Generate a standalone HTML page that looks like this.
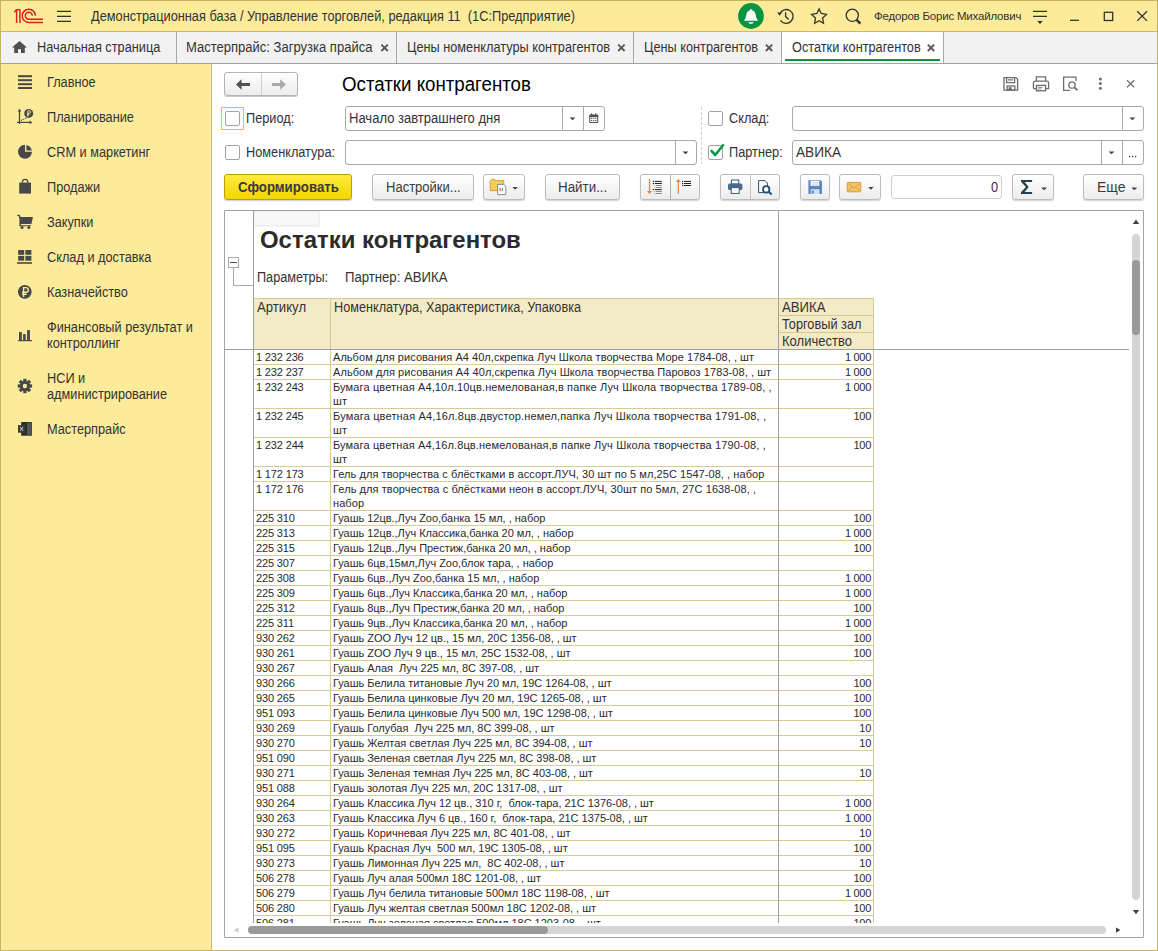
<!DOCTYPE html><html><head><meta charset="utf-8"><style>*{margin:0;padding:0;box-sizing:border-box}
html,body{width:1158px;height:951px;overflow:hidden;background:#fff}
body{position:relative;font-family:"Liberation Sans",sans-serif;color:#333;font-size:13px}
.a{position:absolute}
.t{position:absolute;white-space:pre;line-height:16px;font-size:14px;transform:scaleX(0.91);transform-origin:0 0}
svg{position:absolute;overflow:visible}
#win{position:absolute;left:0;top:0;width:1158px;height:951px;border:1px solid #c6b55e;background:#fbeb9b}
#tbar{position:absolute;left:1px;top:1px;width:1156px;height:31px;background:#fbeb9b;border-bottom:1px solid #c9b866}
#tabs{position:absolute;left:1px;top:32px;width:1156px;height:32px;background:#f2f2f2;border-bottom:1px solid #a3a3a3}
.sep{position:absolute;top:32px;width:1px;height:31px;background:#a8a8a8}
#side{position:absolute;left:1px;top:64px;width:211px;height:886px;background:#fbeb9b;border-right:1px solid #c9b866}
#main{position:absolute;left:212px;top:64px;width:945px;height:886px;background:#fff}
.btn{position:absolute;height:26px;border:1px solid #bdbdbd;border-radius:3px;background:linear-gradient(#fff,#ececec);box-shadow:0 1px 1px rgba(0,0,0,.18)}
.fld{position:absolute;height:24px;border:1px solid #a9a9a9;border-radius:3px;background:#fff}
.vd{position:absolute;top:0;width:1px;height:100%;background:#a9a9a9}
.cb{position:absolute;width:15px;height:15px;border:1px solid #a3a3a3;border-radius:2px;background:#fff}
.arr{position:absolute;width:0;height:0;border-left:4px solid transparent;border-right:4px solid transparent;border-top:4px solid #404040}

.r{position:absolute;white-space:pre;font-size:11px;line-height:14px;color:#2a2a2a;letter-spacing:0.07px}
</style></head><body><div id="win"></div>
<div id="tbar"></div>
<!-- 1C logo -->
<svg class="a" style="left:0;top:0" width="80" height="32" viewBox="0 0 80 32">
<g fill="none" stroke="#d8221c" stroke-width="1.45">
<path d="M16.6,23 V9.6 M19.9,23 V9.6 M15.7,9.6 H19.9 M16.6,9.6 L14.2,12.4"/>
<path d="M35.4,15.8 A6.6,6.6 0 1 0 28.8,22.4 H43"/>
<path d="M32.3,15.8 A3.5,3.5 0 1 0 28.8,19.3 H43"/>
</g>
<g stroke="#333" stroke-width="1.35"><path d="M57,11.4H71M57,16.4H71M57,21.4H71"/></g>
</svg>
<div class="t" style="left:91px;top:8px;color:#333;transform:scaleX(0.913)">Демонстрационная база / Управление торговлей, редакция 11  (1С:Предприятие)</div>
<!-- bell -->
<svg class="a" style="left:0;top:0" width="1158" height="32" viewBox="0 0 1158 32">
<circle cx="751" cy="16" r="12.9" fill="#079442"/>
<path d="M751,9.2 c-0.9,0 -1.4,0.6 -1.4,1.2 c-2.6,0.6 -3.2,2.8 -3.4,5.2 c-0.2,2.4 -1.4,3.8 -2.4,5.2 h14.4 c-1,-1.4 -2.2,-2.8 -2.4,-5.2 c-0.2,-2.4 -0.8,-4.6 -3.4,-5.2 c0,-0.6 -0.5,-1.2 -1.4,-1.2z" fill="#fff"/>
<path d="M748.2,22.2 h5.6 c-0.6,1.2 -1.6,1.6 -2.8,1.6 c-1.2,0 -2.2,-0.4 -2.8,-1.6z" fill="#fff"/>
<g fill="none" stroke="#333" stroke-width="1.3">
<path d="M779.9,13.6 A6.9,6.9 0 1 1 780.5,20.3"/>
<path d="M785.6,12.2 V16.6 L788.6,19.4"/>
<path d="M819.1,8.9 L821.2,13.5 L826.5,14.4 L822.6,17.9 L823.5,23.2 L819.1,20.7 L814.6,23.2 L815.5,17.9 L811.6,14.4 L816.9,13.5Z" stroke-linejoin="miter"/>
<circle cx="852.3" cy="15.3" r="6.1"/>
</g>
<path d="M777.2,12.6 L782,12.4 L779.6,15.8Z" fill="#333"/>
<path d="M856.6,19.8 L860.4,23.6" stroke="#333" stroke-width="2.4"/>
<g stroke="#333" stroke-width="1.3" fill="none">
<path d="M1033,11.3H1047M1033,16.4H1047"/>
<path d="M1070,20.3H1079"/>
<rect x="1104.3" y="12.3" width="8.4" height="8.2"/>
<path d="M1137.2,11.2L1147,20.9M1147,11.2L1137.2,20.9"/>
</g>
<path d="M1037.2,21 H1042.8 L1040,23.9Z" fill="#333"/>
</svg>
<div class="t" style="left:874px;top:8px;font-size:11.5px;letter-spacing:-0.2px;color:#333;transform:none">Федоров Борис Михайлович</div>
<!-- tabs -->
<div id="tabs"></div>
<div class="a" style="left:782px;top:32px;width:161px;height:31px;background:#fff"></div>
<div class="sep" style="left:176px"></div>
<div class="sep" style="left:396px"></div>
<div class="sep" style="left:633px"></div>
<div class="sep" style="left:781px"></div>
<div class="sep" style="left:943px"></div>
<svg class="a" style="left:0;top:32px" width="1158" height="31" viewBox="0 32 1158 31">
<path d="M19.5,41 L12,47.6 H14.2 V53 H18 V49.2 H21 V53 H24.8 V47.6 H27Z" fill="#4f4f4f"/>
<g stroke="#555" stroke-width="1.8">
<path d="M381.4,44.6 L387.8,51 M387.8,44.6 L381.4,51"/>
<path d="M618.2,44.6 L624.6,51 M624.6,44.6 L618.2,51"/>
<path d="M765.9,44.6 L772.3,51 M772.3,44.6 L765.9,51"/>
<path d="M927.8,44.6 L934.2,51 M934.2,44.6 L927.8,51"/>
</g>
<rect x="785" y="59" width="155" height="2" fill="#17933f"/>
</svg>
<div class="t" style="left:37px;top:39px">Начальная страница</div>
<div class="t" style="left:186px;top:39px;transform:scaleX(0.93)">Мастерпрайс: Загрузка прайса</div>
<div class="t" style="left:407px;top:39px">Цены номенклатуры контрагентов</div>
<div class="t" style="left:644px;top:39px">Цены контрагентов</div>
<div class="t" style="left:792px;top:39px">Остатки контрагентов</div>
<!-- sidebar -->
<div id="side"></div>
<svg class="a" style="left:0;top:64px" width="212" height="400" viewBox="0 64 212 400">
<g fill="#484848">
<rect x="18" y="75.2" width="14" height="2"/><rect x="18" y="79.2" width="14" height="2"/><rect x="18" y="83.2" width="14" height="2"/><rect x="18" y="87" width="14" height="2"/>
<circle cx="28.7" cy="113.4" r="4.5"/>
<path d="M25,144.8 A7,7 0 1 0 32,151.8 H25Z"/><path d="M26.4,145 A7,7 0 0 1 31.8,150.4 H26.4Z"/>
<path d="M19.2,182.6 H31 V193.6 H19.2Z"/>
<path d="M17.3,214.7 H19.6 L20.6,217 H33 L31.4,224 H20.9 L20.9,225.2 H30.9 V226.2 H19.4 V219 L18.6,216 H17.3Z"/>
<circle cx="22" cy="227.5" r="1.5"/><circle cx="28.8" cy="227.5" r="1.5"/>
<rect x="18.2" y="250" width="6" height="4.8"/><rect x="25.4" y="250" width="6" height="4.8"/><rect x="18.2" y="255.9" width="6" height="4.8"/><rect x="25.4" y="255.9" width="6" height="4.8"/><rect x="17" y="262.2" width="15" height="1.6"/>
<circle cx="24.8" cy="291.8" r="6.9"/>
<rect x="18" y="340" width="14" height="1.2"/><rect x="19" y="332.1" width="2.8" height="8"/><rect x="23.1" y="334.1" width="2.6" height="6"/><rect x="27.1" y="330.1" width="2.8" height="10"/>
</g>
<g fill="none" stroke="#484848" stroke-width="1.3">
<path d="M19.5,110 V124 M17,122.4 H31"/><path d="M21,120.6 L22.6,119.4 H23.8 L25.2,118.2 H26.6" stroke-dasharray="1.6,0.8" stroke-width="1"/>
<path d="M22.4,182.8 V182 A2.7,2.7 0 0 1 27.8,182 V182.8"/>
</g>
<path d="M19.5,108.8 L17.6,111.6 H21.4Z M32.4,122.4 L29.6,120.5 V124.3Z" fill="#484848"/>
<g stroke="#fbeb9b" stroke-width="0.9" fill="none"><path d="M27.9,116.6 V110.8 H29.5 A1.2,1.2 0 0 1 29.5,113.2 H26.9 M26.9,114.7 H29.6"/></g>
<g stroke="#fbeb9b" stroke-width="1.4" fill="none"><path d="M23.6,297 V287.6 H26 A2.3,2.3 0 0 1 26,292.2 H22 M22,294.2 H26.6"/></g>
<!-- gear -->
<g transform="translate(24.9,386)" fill="#484848">
<circle r="5.2"/>
<g id="teeth"><rect x="-1.6" y="-7.2" width="3.2" height="14.4"/><rect x="-1.6" y="-7.2" width="3.2" height="14.4" transform="rotate(45)"/><rect x="-1.6" y="-7.2" width="3.2" height="14.4" transform="rotate(90)"/><rect x="-1.6" y="-7.2" width="3.2" height="14.4" transform="rotate(135)"/></g>
<circle r="2.2" fill="#fbeb9b"/>
</g>
<!-- excel -->
<rect x="21.2" y="422" width="10.7" height="13.7" fill="#2a2a2a"/><rect x="27" y="422.6" width="4.6" height="12.8" fill="#555"/><rect x="18" y="425.1" width="6.9" height="7.6" fill="#3a3a3a"/>
<path d="M20.2,427 L23,430.8 M23,427 L20.2,430.8" stroke="#cfe8dc" stroke-width="0.9"/>
</svg>
<div class="t" style="left:47px;top:74px">Главное</div>
<div class="t" style="left:47px;top:109px">Планирование</div>
<div class="t" style="left:47px;top:144px">CRM и маркетинг</div>
<div class="t" style="left:47px;top:179px">Продажи</div>
<div class="t" style="left:47px;top:214px">Закупки</div>
<div class="t" style="left:47px;top:249px">Склад и доставка</div>
<div class="t" style="left:47px;top:284px">Казначейство</div>
<div class="t" style="left:47px;top:319px">Финансовый результат и<br>контроллинг</div>
<div class="t" style="left:47px;top:370px">НСИ и<br>администрирование</div>
<div class="t" style="left:47px;top:421px">Мастерпрайс</div>
<div id="main"></div>
<!-- form header -->
<div class="btn" style="left:224px;top:72px;width:74px;height:24px;border-color:#b3b3b3;box-shadow:0 1px 0 #c8c8c8"></div>
<div class="a" style="left:261px;top:73px;width:1px;height:22px;background:#d0d0d0"></div>
<div class="t" style="left:342px;top:73px;font-size:20px;line-height:22px;color:#000;transform:scaleX(0.935)">Остатки контрагентов</div>
<!-- row1 -->
<div class="a" style="left:221px;top:107px;width:23px;height:23px;border:1px solid #f6c21a"></div>
<div class="cb" style="left:225px;top:111px"></div>
<div class="t" style="left:246px;top:110px">Период:</div>
<div class="fld" style="left:345px;top:106px;width:260px;height:25px"><div class="vd" style="left:216px"></div><div class="vd" style="left:237px"></div></div>
<div class="t" style="left:349px;top:110px;transform:scaleX(0.93)">Начало завтрашнего дня</div>
<div class="cb" style="left:708px;top:111px"></div>
<div class="t" style="left:729px;top:110px">Склад:</div>
<div class="fld" style="left:792px;top:106px;width:352px;height:25px"><div class="vd" style="left:329px"></div></div>
<!-- row2 -->
<div class="cb" style="left:225px;top:145px"></div>
<div class="t" style="left:246px;top:144px">Номенклатура:</div>
<div class="fld" style="left:345px;top:140px;width:352px;height:25px"><div class="vd" style="left:329px"></div></div>
<div class="cb" style="left:708px;top:145px"></div>
<div class="t" style="left:729px;top:144px">Партнер:</div>
<div class="fld" style="left:792px;top:140px;width:352px;height:25px"><div class="vd" style="left:308px"></div><div class="vd" style="left:329px"></div></div>
<div class="t" style="left:796px;top:144px;transform:scaleX(0.977)">АВИКА</div>
<!-- buttons row -->
<div class="btn" style="left:224px;top:174px;width:128px;border-color:#b9a200;background:linear-gradient(#ffea3c,#f4d600);box-shadow:0 1px 1px rgba(0,0,0,.2)"></div>
<div class="t" style="left:238px;top:179px;font-weight:bold;color:#3a3a3a;transform:scaleX(0.946)">Сформировать</div>
<div class="btn" style="left:372px;top:174px;width:102px"></div>
<div class="t" style="left:386px;top:179px;color:#3c3c3c;transform:scaleX(0.93)">Настройки...</div>
<div class="btn" style="left:483px;top:174px;width:42px"></div>
<div class="btn" style="left:545px;top:174px;width:75px"></div>
<div class="t" style="left:558px;top:179px;color:#3c3c3c;transform:scaleX(0.955)">Найти...</div>
<div class="btn" style="left:640px;top:174px;width:60px"></div>
<div class="a" style="left:670px;top:175px;width:1px;height:24px;background:#b0b0b0"></div>
<div class="btn" style="left:720px;top:174px;width:60px"></div>
<div class="a" style="left:750px;top:175px;width:1px;height:24px;background:#c4c4c4"></div>
<div class="btn" style="left:800px;top:174px;width:30px"></div>
<div class="btn" style="left:839px;top:174px;width:42px"></div>
<div class="fld" style="left:891px;top:175px;width:111px;border-color:#cfcfcf"></div>
<div class="t" style="left:991px;top:179px">0</div>
<div class="btn" style="left:1012px;top:174px;width:42px"></div>
<div class="btn" style="left:1083px;top:174px;width:61px"></div>
<div class="t" style="left:1097px;top:179px;color:#3c3c3c;transform:scaleX(1.0)">Еще</div>
<svg class="a" style="left:0;top:0" width="1158" height="210" viewBox="0 0 1158 210">
<!-- nav arrows -->
<path d="M236,84.5 L241.6,79.2 V83 H250 V86 H241.6 V89.8Z" fill="#505050"/>
<path d="M285.8,84.5 L280.2,79.2 V83 H272 V86 H280.2 V89.8Z" fill="#a8a8a8"/>
<!-- header icons -->
<g fill="none" stroke="#6d6d6d" stroke-width="1.3">
<path d="M1004,77.6 H1016 L1017.6,79.2 V90.2 H1004Z"/><path d="M1006.6,77.6 V82.6 H1014.6 V77.6 M1008,79.8 H1013"/><rect x="1007.2" y="86" width="7.6" height="4.2"/>
<path d="M1036.4,81.2 V76.8 H1045.6 V81.2 M1033.4,88.6 V83 Q1033.4,81.2 1035.2,81.2 H1046.8 Q1048.6,81.2 1048.6,83 V88.6 H1045.6 M1036.4,88.6 H1033.4"/><rect x="1036.4" y="85.4" width="9.2" height="5.4"/>
<path d="M1070,90.4 H1063.6 V77.2 H1076 V81"/><circle cx="1072" cy="85" r="3.2"/><path d="M1074.4,87.4 L1077.4,90.4" stroke-width="1.8"/>
</g>
<rect x="1008.6" y="87.2" width="3" height="3" fill="#6d6d6d"/>
<path d="M1037.8,87.4 H1042.6 M1037.8,89 H1041.4" stroke="#6d6d6d" stroke-width="0.8"/>
<circle cx="1100.4" cy="79" r="1.5" fill="#6d6d6d"/><circle cx="1100.4" cy="83.6" r="1.5" fill="#6d6d6d"/><circle cx="1100.4" cy="88.2" r="1.5" fill="#6d6d6d"/>
<path d="M1127,80.2 L1134.2,87.2 M1134.2,80.2 L1127,87.2" stroke="#6d6d6d" stroke-width="1.2"/>
<!-- field arrows -->
<g fill="#404040">
<path d="M569.6,117.4 H575.4 L572.5,120.2Z"/>
<path d="M1129.5,117.4 H1135.3 L1132.4,120.2Z"/>
<path d="M682.6,151.4 H688.4 L685.5,154.2Z"/>
<path d="M1108.6,151.4 H1114.4 L1111.5,154.2Z"/>
<circle cx="1129.6" cy="156.6" r="0.8"/><circle cx="1132.6" cy="156.6" r="0.8"/><circle cx="1135.6" cy="156.6" r="0.8"/>
</g>
<!-- calendar -->
<rect x="589.2" y="114.4" width="9" height="8.6" rx="1" fill="#505050"/><rect x="590.2" y="117.2" width="7" height="4.8" fill="#fff"/>
<g fill="#505050"><rect x="591" y="118" width="1.2" height="1"/><rect x="593.1" y="118" width="1.2" height="1"/><rect x="595.2" y="118" width="1.2" height="1"/><rect x="591" y="120" width="1.2" height="1"/><rect x="593.1" y="120" width="1.2" height="1"/><rect x="595.2" y="120" width="1.2" height="1"/><rect x="591" y="113.4" width="1.2" height="2"/><rect x="595.2" y="113.4" width="1.2" height="2"/></g>
<!-- dashed separator -->
<path d="M701.5,107 V164" stroke="#cfcfcf" stroke-width="1" stroke-dasharray="3,2"/>
<!-- check -->
<path d="M711.6,151 L715.3,155 L723,145.2" fill="none" stroke="#0a9a48" stroke-width="2.6" stroke-linecap="round" stroke-linejoin="round"/>
<!-- folder icon -->
<path d="M490.2,181.2 L491.6,179.4 H494.6 L495.6,180.6 H503.8 V190.6 H490.2Z" fill="#f3cd5a" stroke="#d39a2a" stroke-width="0.9"/>
<path d="M497.6,184.4 H503.6 L505.8,186.6 V194.6 H497.6Z" fill="#fff" stroke="#6f8396" stroke-width="0.9"/>
<rect x="499.6" y="188" width="1" height="3.2" fill="#e63030"/><rect x="501.8" y="188" width="1" height="3.2" fill="#30b040"/>
<path d="M512.4,187 H517.8 L515.1,189.8Z" fill="#404040"/>
<!-- sort icons -->
<g stroke="#f08a4b" stroke-width="1.3" fill="#f08a4b"><path d="M649.5,179 V192" /><path d="M646.9,191 H652.1 L649.5,194.2Z" stroke="none"/>
<path d="M678.3,194 V181"/><path d="M675.7,182 H680.9 L678.3,178.8Z" stroke="none"/></g>
<g fill="#222"><rect x="652.8" y="180.8" width="1.2" height="1.2"/><rect x="654.8" y="180.9" width="7" height="1"/><rect x="652.8" y="182.9" width="1.2" height="1.2"/><rect x="654.8" y="183" width="7" height="1"/><rect x="652.8" y="189" width="1.2" height="1.2"/><rect x="654.8" y="189.1" width="7" height="1"/>
<rect x="682" y="180.8" width="1.2" height="1.2"/><rect x="684" y="180.9" width="7" height="1"/><rect x="682" y="182.9" width="1.2" height="1.2"/><rect x="684" y="183" width="7" height="1"/><rect x="682" y="184.9" width="1.2" height="1.2"/><rect x="684" y="185" width="7" height="1"/></g>
<g fill="#888"><rect x="655.8" y="185" width="6" height="1"/><rect x="655.8" y="187" width="6" height="1"/><rect x="655.8" y="191" width="6" height="1"/><rect x="655.8" y="193" width="6" height="1"/><rect x="654" y="185" width="0.8" height="0.8"/><rect x="654" y="187" width="0.8" height="0.8"/><rect x="654" y="191" width="0.8" height="0.8"/><rect x="654" y="193" width="0.8" height="0.8"/></g>
<!-- printer -->
<rect x="731.4" y="180" width="7.4" height="4" fill="#fff" stroke="#3c5876" stroke-width="1"/>
<rect x="728" y="183.4" width="14.4" height="6.6" rx="1.6" fill="#4a6c92"/>
<rect x="731.2" y="187.6" width="8" height="5.8" fill="#fff" stroke="#3c5876" stroke-width="1"/>
<!-- preview -->
<path d="M758.6,180.6 H765 L767.4,183 V192.6 H758.6Z" fill="#fff" stroke="#2d4d6e" stroke-width="1"/>
<circle cx="766.2" cy="189.4" r="3.2" fill="#fff" stroke="#1f4e79" stroke-width="1.8"/><path d="M768.4,191.6 L771.6,194.6" stroke="#1f4e79" stroke-width="2"/>
<!-- floppy -->
<path d="M808.4,180.2 H820.4 L822,181.8 V194 H808.4Z" fill="#5b88c0"/><rect x="810.6" y="180.8" width="8.6" height="5" fill="#fff"/><rect x="810.8" y="189.2" width="8.6" height="4.8" fill="#d7e0ea"/><rect x="811.8" y="190.6" width="2" height="3" fill="#5b88c0"/>
<path d="M811.8,182.6 H818 M811.8,184.2 H818" stroke="#9fb6d2" stroke-width="0.6"/>
<!-- envelope -->
<rect x="847.2" y="182.4" width="13.6" height="9.4" rx="1" fill="#f2c46a" stroke="#d8952c" stroke-width="0.9"/><path d="M847.6,183 L854,188 L860.4,183 M847.6,191.4 L852.4,187.2 M860.4,191.4 L855.6,187.2" fill="none" stroke="#d8952c" stroke-width="0.8"/>
<path d="M868.2,187 H873.6 L870.9,189.8Z" fill="#404040"/>
<!-- sigma -->
<path d="M1021,180 H1032.1 V182 H1024.6 L1028.7,187 L1024.6,192 H1032.1 V194 H1021 V192.2 L1025.9,187 L1021,181.8Z" fill="#26404f"/>
<path d="M1041.2,187.4 H1047 L1044.1,190.2Z" fill="#404040"/>
<path d="M1131.4,187.4 H1137.2 L1134.3,190.2Z" fill="#404040"/>
</svg>
<!-- sheet frame -->
<div class="a" style="left:224px;top:210px;width:920px;height:728px;border:1px solid #a3a3a3;border-radius:1px;background:#fff"></div>
<div class="a" style="left:254px;top:211px;width:66px;height:16px;background:#f0f0f0"></div>
<div class="a" style="left:255px;top:212px;width:63px;height:13px;background:#f8f8f8"></div>
<div class="a" style="left:253px;top:211px;width:1px;height:712px;background:#a0a0a0"></div>
<!-- collapse box + tree -->
<div class="a" style="left:228px;top:257px;width:11px;height:11px;border:1px solid #a8a8a8;background:#fff"></div>
<div class="a" style="left:230px;top:262px;width:7px;height:1px;background:#505050"></div>
<div class="a" style="left:233px;top:268px;width:1px;height:18px;background:#a8a8a8"></div>
<div class="a" style="left:233px;top:285px;width:20px;height:1px;background:#a8a8a8"></div>
<div class="t" style="left:260px;top:227px;font-size:24px;line-height:26px;font-weight:bold;color:#2b2b2b;transform:scaleX(0.997)">Остатки контрагентов</div>
<div class="t" style="left:257px;top:269px;transform:scaleX(0.906)">Параметры:</div>
<div class="t" style="left:345px;top:269px;transform:scaleX(0.939)">Партнер: АВИКА</div>
<!-- header -->
<div class="a" style="left:254px;top:298px;width:524px;height:51px;background:#f3ebc6;border-top:1px solid #d6c98f"></div>
<div class="a" style="left:330px;top:299px;width:1px;height:50px;background:#d6c98f"></div>
<div class="a" style="left:779px;top:298px;width:95px;height:51px;background:#f3ebc6;border:1px solid #d6c98f;border-left:0;border-bottom:0"></div>
<div class="a" style="left:779px;top:315px;width:94px;height:1px;background:#d6c98f"></div>
<div class="a" style="left:779px;top:332px;width:94px;height:1px;background:#d6c98f"></div>
<div class="t" style="left:257px;top:299px;transform:scaleX(0.94)">Артикул</div>
<div class="t" style="left:334px;top:299px;transform:scaleX(0.905)">Номенклатура, Характеристика, Упаковка</div>
<div class="t" style="left:782px;top:299px;transform:scaleX(0.94)">АВИКА</div>
<div class="t" style="left:782px;top:316px;transform:scaleX(0.911)">Торговый зал</div>
<div class="t" style="left:782px;top:333px;transform:scaleX(0.93)">Количество</div>
<div class="a" style="left:225px;top:350px;width:904px;height:573px;overflow:hidden">
<div class="r" style="left:31px;top:0px;letter-spacing:-0.15px">1 232 236</div>
<div class="r" style="left:108px;top:0px;letter-spacing:0.045px">Альбом для рисования А4 40л,скрепка Луч Школа творчества Море 1784-08, , шт</div>
<div class="r" style="left:554px;top:0px;width:92px;text-align:right;letter-spacing:-0.3px">1 000</div>
<div class="a" style="left:29px;top:14px;width:620px;height:1px;background:#d9cb94"></div>
<div class="r" style="left:31px;top:15px;letter-spacing:-0.15px">1 232 237</div>
<div class="r" style="left:108px;top:15px;letter-spacing:0.065px">Альбом для рисования А4 40л,скрепка Луч Школа творчества Паровоз 1783-08, , шт</div>
<div class="r" style="left:554px;top:15px;width:92px;text-align:right;letter-spacing:-0.3px">1 000</div>
<div class="a" style="left:29px;top:29px;width:620px;height:1px;background:#d9cb94"></div>
<div class="r" style="left:31px;top:30px;letter-spacing:-0.15px">1 232 243</div>
<div class="r" style="left:108px;top:30px;letter-spacing:0.13px">Бумага цветная А4,10л.10цв.немелованая,в папке Луч Школа творчества 1789-08, ,<br>шт</div>
<div class="r" style="left:554px;top:30px;width:92px;text-align:right;letter-spacing:-0.3px">1 000</div>
<div class="a" style="left:29px;top:58px;width:620px;height:1px;background:#d9cb94"></div>
<div class="r" style="left:31px;top:59px;letter-spacing:-0.15px">1 232 245</div>
<div class="r" style="left:108px;top:59px;letter-spacing:0.165px">Бумага цветная А4,16л.8цв.двустор.немел,папка Луч Школа творчества 1791-08, ,<br>шт</div>
<div class="r" style="left:554px;top:59px;width:92px;text-align:right;letter-spacing:-0.3px">100</div>
<div class="a" style="left:29px;top:87px;width:620px;height:1px;background:#d9cb94"></div>
<div class="r" style="left:31px;top:88px;letter-spacing:-0.15px">1 232 244</div>
<div class="r" style="left:108px;top:88px;letter-spacing:0.135px">Бумага цветная А4,16л.8цв.немелованая,в папке Луч Школа творчества 1790-08, ,<br>шт</div>
<div class="r" style="left:554px;top:88px;width:92px;text-align:right;letter-spacing:-0.3px">100</div>
<div class="a" style="left:29px;top:116px;width:620px;height:1px;background:#d9cb94"></div>
<div class="r" style="left:31px;top:117px;letter-spacing:-0.15px">1 172 173</div>
<div class="r" style="left:108px;top:117px;letter-spacing:0.065px">Гель для творчества с блёстками в ассорт.ЛУЧ, 30 шт по 5 мл,25С 1547-08, , набор</div>
<div class="a" style="left:29px;top:131px;width:620px;height:1px;background:#d9cb94"></div>
<div class="r" style="left:31px;top:132px;letter-spacing:-0.15px">1 172 176</div>
<div class="r" style="left:108px;top:132px;letter-spacing:0.08px">Гель для творчества с блёстками неон в ассорт.ЛУЧ, 30шт по 5мл, 27С 1638-08, ,<br>набор</div>
<div class="a" style="left:29px;top:160px;width:620px;height:1px;background:#d9cb94"></div>
<div class="r" style="left:31px;top:161px;letter-spacing:-0.15px">225 310</div>
<div class="r" style="left:108px;top:161px;letter-spacing:-0.02px">Гуашь 12цв.,Луч Zoo,банка 15 мл, , набор</div>
<div class="r" style="left:554px;top:161px;width:92px;text-align:right;letter-spacing:-0.3px">100</div>
<div class="a" style="left:29px;top:175px;width:620px;height:1px;background:#d9cb94"></div>
<div class="r" style="left:31px;top:176px;letter-spacing:-0.15px">225 313</div>
<div class="r" style="left:108px;top:176px;letter-spacing:-0.02px">Гуашь 12цв.,Луч Классика,банка 20 мл, , набор</div>
<div class="r" style="left:554px;top:176px;width:92px;text-align:right;letter-spacing:-0.3px">1 000</div>
<div class="a" style="left:29px;top:190px;width:620px;height:1px;background:#d9cb94"></div>
<div class="r" style="left:31px;top:191px;letter-spacing:-0.15px">225 315</div>
<div class="r" style="left:108px;top:191px;letter-spacing:-0.02px">Гуашь 12цв.,Луч Престиж,банка 20 мл, , набор</div>
<div class="r" style="left:554px;top:191px;width:92px;text-align:right;letter-spacing:-0.3px">100</div>
<div class="a" style="left:29px;top:205px;width:620px;height:1px;background:#d9cb94"></div>
<div class="r" style="left:31px;top:206px;letter-spacing:-0.15px">225 307</div>
<div class="r" style="left:108px;top:206px;letter-spacing:-0.02px">Гуашь 6цв,15мл,Луч Zoo,блок тара, , набор</div>
<div class="a" style="left:29px;top:220px;width:620px;height:1px;background:#d9cb94"></div>
<div class="r" style="left:31px;top:221px;letter-spacing:-0.15px">225 308</div>
<div class="r" style="left:108px;top:221px;letter-spacing:-0.02px">Гуашь 6цв.,Луч Zoo,банка 15 мл, , набор</div>
<div class="r" style="left:554px;top:221px;width:92px;text-align:right;letter-spacing:-0.3px">1 000</div>
<div class="a" style="left:29px;top:235px;width:620px;height:1px;background:#d9cb94"></div>
<div class="r" style="left:31px;top:236px;letter-spacing:-0.15px">225 309</div>
<div class="r" style="left:108px;top:236px;letter-spacing:-0.02px">Гуашь 6цв.,Луч Классика,банка 20 мл, , набор</div>
<div class="r" style="left:554px;top:236px;width:92px;text-align:right;letter-spacing:-0.3px">1 000</div>
<div class="a" style="left:29px;top:250px;width:620px;height:1px;background:#d9cb94"></div>
<div class="r" style="left:31px;top:251px;letter-spacing:-0.15px">225 312</div>
<div class="r" style="left:108px;top:251px;letter-spacing:-0.02px">Гуашь 8цв.,Луч Престиж,банка 20 мл, , набор</div>
<div class="r" style="left:554px;top:251px;width:92px;text-align:right;letter-spacing:-0.3px">100</div>
<div class="a" style="left:29px;top:265px;width:620px;height:1px;background:#d9cb94"></div>
<div class="r" style="left:31px;top:266px;letter-spacing:-0.15px">225 311</div>
<div class="r" style="left:108px;top:266px;letter-spacing:-0.02px">Гуашь 9цв.,Луч Классика,банка 20 мл, , набор</div>
<div class="r" style="left:554px;top:266px;width:92px;text-align:right;letter-spacing:-0.3px">1 000</div>
<div class="a" style="left:29px;top:280px;width:620px;height:1px;background:#d9cb94"></div>
<div class="r" style="left:31px;top:281px;letter-spacing:-0.15px">930 262</div>
<div class="r" style="left:108px;top:281px;letter-spacing:-0.02px">Гуашь ZOO Луч 12 цв., 15 мл, 20С 1356-08, , шт</div>
<div class="r" style="left:554px;top:281px;width:92px;text-align:right;letter-spacing:-0.3px">100</div>
<div class="a" style="left:29px;top:295px;width:620px;height:1px;background:#d9cb94"></div>
<div class="r" style="left:31px;top:296px;letter-spacing:-0.15px">930 261</div>
<div class="r" style="left:108px;top:296px;letter-spacing:-0.02px">Гуашь ZOO Луч 9 цв., 15 мл, 25С 1532-08, , шт</div>
<div class="r" style="left:554px;top:296px;width:92px;text-align:right;letter-spacing:-0.3px">100</div>
<div class="a" style="left:29px;top:310px;width:620px;height:1px;background:#d9cb94"></div>
<div class="r" style="left:31px;top:311px;letter-spacing:-0.15px">930 267</div>
<div class="r" style="left:108px;top:311px;letter-spacing:-0.02px">Гуашь Алая  Луч 225 мл, 8С 397-08, , шт</div>
<div class="a" style="left:29px;top:325px;width:620px;height:1px;background:#d9cb94"></div>
<div class="r" style="left:31px;top:326px;letter-spacing:-0.15px">930 266</div>
<div class="r" style="left:108px;top:326px;letter-spacing:-0.02px">Гуашь Белила титановые Луч 20 мл, 19С 1264-08, , шт</div>
<div class="r" style="left:554px;top:326px;width:92px;text-align:right;letter-spacing:-0.3px">100</div>
<div class="a" style="left:29px;top:340px;width:620px;height:1px;background:#d9cb94"></div>
<div class="r" style="left:31px;top:341px;letter-spacing:-0.15px">930 265</div>
<div class="r" style="left:108px;top:341px;letter-spacing:-0.02px">Гуашь Белила цинковые Луч 20 мл, 19С 1265-08, , шт</div>
<div class="r" style="left:554px;top:341px;width:92px;text-align:right;letter-spacing:-0.3px">100</div>
<div class="a" style="left:29px;top:355px;width:620px;height:1px;background:#d9cb94"></div>
<div class="r" style="left:31px;top:356px;letter-spacing:-0.15px">951 093</div>
<div class="r" style="left:108px;top:356px;letter-spacing:-0.02px">Гуашь Белила цинковые Луч 500 мл, 19С 1298-08, , шт</div>
<div class="r" style="left:554px;top:356px;width:92px;text-align:right;letter-spacing:-0.3px">100</div>
<div class="a" style="left:29px;top:370px;width:620px;height:1px;background:#d9cb94"></div>
<div class="r" style="left:31px;top:371px;letter-spacing:-0.15px">930 269</div>
<div class="r" style="left:108px;top:371px;letter-spacing:-0.02px">Гуашь Голубая  Луч 225 мл, 8С 399-08, , шт</div>
<div class="r" style="left:554px;top:371px;width:92px;text-align:right;letter-spacing:-0.3px">10</div>
<div class="a" style="left:29px;top:385px;width:620px;height:1px;background:#d9cb94"></div>
<div class="r" style="left:31px;top:386px;letter-spacing:-0.15px">930 270</div>
<div class="r" style="left:108px;top:386px;letter-spacing:-0.02px">Гуашь Желтая светлая Луч 225 мл, 8С 394-08, , шт</div>
<div class="r" style="left:554px;top:386px;width:92px;text-align:right;letter-spacing:-0.3px">10</div>
<div class="a" style="left:29px;top:400px;width:620px;height:1px;background:#d9cb94"></div>
<div class="r" style="left:31px;top:401px;letter-spacing:-0.15px">951 090</div>
<div class="r" style="left:108px;top:401px;letter-spacing:-0.02px">Гуашь Зеленая светлая Луч 225 мл, 8С 398-08, , шт</div>
<div class="a" style="left:29px;top:415px;width:620px;height:1px;background:#d9cb94"></div>
<div class="r" style="left:31px;top:416px;letter-spacing:-0.15px">930 271</div>
<div class="r" style="left:108px;top:416px;letter-spacing:-0.02px">Гуашь Зеленая темная Луч 225 мл, 8С 403-08, , шт</div>
<div class="r" style="left:554px;top:416px;width:92px;text-align:right;letter-spacing:-0.3px">10</div>
<div class="a" style="left:29px;top:430px;width:620px;height:1px;background:#d9cb94"></div>
<div class="r" style="left:31px;top:431px;letter-spacing:-0.15px">951 088</div>
<div class="r" style="left:108px;top:431px;letter-spacing:-0.02px">Гуашь золотая Луч 225 мл, 20С 1317-08, , шт</div>
<div class="a" style="left:29px;top:445px;width:620px;height:1px;background:#d9cb94"></div>
<div class="r" style="left:31px;top:446px;letter-spacing:-0.15px">930 264</div>
<div class="r" style="left:108px;top:446px;letter-spacing:-0.02px">Гуашь Классика Луч 12 цв., 310 г,  блок-тара, 21С 1376-08, , шт</div>
<div class="r" style="left:554px;top:446px;width:92px;text-align:right;letter-spacing:-0.3px">1 000</div>
<div class="a" style="left:29px;top:460px;width:620px;height:1px;background:#d9cb94"></div>
<div class="r" style="left:31px;top:461px;letter-spacing:-0.15px">930 263</div>
<div class="r" style="left:108px;top:461px;letter-spacing:-0.02px">Гуашь Классика Луч 6 цв., 160 г,  блок-тара, 21С 1375-08, , шт</div>
<div class="r" style="left:554px;top:461px;width:92px;text-align:right;letter-spacing:-0.3px">1 000</div>
<div class="a" style="left:29px;top:475px;width:620px;height:1px;background:#d9cb94"></div>
<div class="r" style="left:31px;top:476px;letter-spacing:-0.15px">930 272</div>
<div class="r" style="left:108px;top:476px;letter-spacing:-0.02px">Гуашь Коричневая Луч 225 мл, 8С 401-08, , шт</div>
<div class="r" style="left:554px;top:476px;width:92px;text-align:right;letter-spacing:-0.3px">10</div>
<div class="a" style="left:29px;top:490px;width:620px;height:1px;background:#d9cb94"></div>
<div class="r" style="left:31px;top:491px;letter-spacing:-0.15px">951 095</div>
<div class="r" style="left:108px;top:491px;letter-spacing:-0.02px">Гуашь Красная Луч  500 мл, 19С 1305-08, , шт</div>
<div class="r" style="left:554px;top:491px;width:92px;text-align:right;letter-spacing:-0.3px">100</div>
<div class="a" style="left:29px;top:505px;width:620px;height:1px;background:#d9cb94"></div>
<div class="r" style="left:31px;top:506px;letter-spacing:-0.15px">930 273</div>
<div class="r" style="left:108px;top:506px;letter-spacing:-0.02px">Гуашь Лимонная Луч 225 мл,  8С 402-08, , шт</div>
<div class="r" style="left:554px;top:506px;width:92px;text-align:right;letter-spacing:-0.3px">10</div>
<div class="a" style="left:29px;top:520px;width:620px;height:1px;background:#d9cb94"></div>
<div class="r" style="left:31px;top:521px;letter-spacing:-0.15px">506 278</div>
<div class="r" style="left:108px;top:521px;letter-spacing:-0.02px">Гуашь Луч алая 500мл 18С 1201-08, , шт</div>
<div class="r" style="left:554px;top:521px;width:92px;text-align:right;letter-spacing:-0.3px">100</div>
<div class="a" style="left:29px;top:535px;width:620px;height:1px;background:#d9cb94"></div>
<div class="r" style="left:31px;top:536px;letter-spacing:-0.15px">506 279</div>
<div class="r" style="left:108px;top:536px;letter-spacing:-0.02px">Гуашь Луч белила титановые 500мл 18С 1198-08, , шт</div>
<div class="r" style="left:554px;top:536px;width:92px;text-align:right;letter-spacing:-0.3px">1 000</div>
<div class="a" style="left:29px;top:550px;width:620px;height:1px;background:#d9cb94"></div>
<div class="r" style="left:31px;top:551px;letter-spacing:-0.15px">506 280</div>
<div class="r" style="left:108px;top:551px;letter-spacing:-0.02px">Гуашь Луч желтая светлая 500мл 18С 1202-08, , шт</div>
<div class="r" style="left:554px;top:551px;width:92px;text-align:right;letter-spacing:-0.3px">100</div>
<div class="a" style="left:29px;top:565px;width:620px;height:1px;background:#d9cb94"></div>
<div class="r" style="left:31px;top:566px;letter-spacing:-0.15px">506 281</div>
<div class="r" style="left:108px;top:566px;letter-spacing:-0.02px">Гуашь Луч зеленая светлая 500мл 18С 1203-08, , шт</div>
<div class="r" style="left:554px;top:566px;width:92px;text-align:right;letter-spacing:-0.3px">100</div>
<div class="a" style="left:29px;top:580px;width:620px;height:1px;background:#d9cb94"></div>
<div class="a" style="left:105px;top:0;width:1px;height:581px;background:#d9cb94"></div>
<div class="a" style="left:648px;top:0;width:1px;height:581px;background:#d9cb94"></div>
</div>
<div class="a" style="left:225px;top:349px;width:904px;height:1px;background:#a0a0a0"></div>
<div class="a" style="left:778px;top:211px;width:1px;height:712px;background:#a0a0a0"></div>
<svg class="a" style="left:0;top:200px" width="1158" height="751" viewBox="0 200 1158 751">
<path d="M1132.8,224 H1139.2 L1136,219.6Z" fill="#404040"/>
<path d="M1132.8,910 H1139.2 L1136,914.2Z" fill="#404040"/>
<path d="M238.4,927.4 V932.8 L234,930.1Z" fill="#c8c8c8"/>
<path d="M1116,927.4 V932.8 L1120.4,930.1Z" fill="#404040"/>
</svg>
<div class="a" style="left:1132px;top:234px;width:8px;height:666px;border-radius:4px;background:#d5d5d5"></div>
<div class="a" style="left:1132px;top:260px;width:8px;height:75px;border-radius:4px;background:#9a9a9a"></div>
<div class="a" style="left:248px;top:926px;width:858px;height:8px;border-radius:4px;background:#d5d5d5"></div>
<div class="a" style="left:248px;top:926px;width:300px;height:8px;border-radius:4px;background:#9a9a9a"></div></body></html>
